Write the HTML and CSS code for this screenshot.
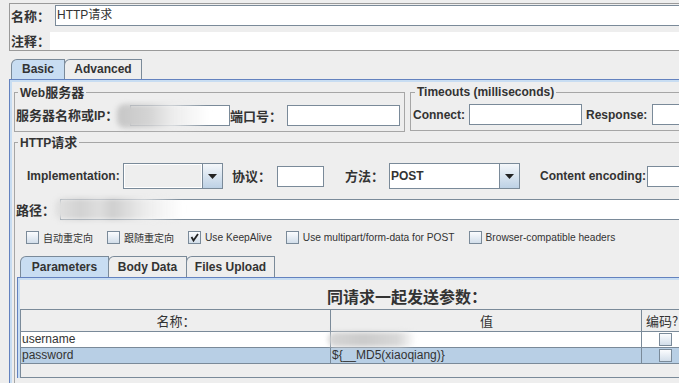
FILE: index.html
```html
<!DOCTYPE html>
<html lang="zh-CN">
<head>
  <meta charset="UTF-8">
  <meta name="viewport" content="width=device-width, initial-scale=1.0">
  <title>HTTP请求</title>
  <link rel="stylesheet" href="styles.css">
</head>
<body>
  <div class="name-panel">
    <div class="name-row">
      <span class="label zh name-label">名称：</span>
      <div class="text-field name-field">HTTP请求</div>
    </div>
    <div class="comment-row">
      <span class="label zh comment-label">注释：</span>
      <div class="comment-field"></div>
    </div>
  </div>

  <div class="tabs main-tabs">
    <div class="tab active basic-tab">Basic</div>
    <div class="tab advanced-tab">Advanced</div>
  </div>

  <div class="tab-panel main-panel">
    <div class="server-row">
      <fieldset class="group web-group">
        <legend>Web<span class="zh">服务器</span></legend>
        <div class="field-row">
          <span class="label host-label"><span class="zh">服务器名称或</span>IP<span class="zh">：</span></span>
          <div class="text-field host-field"></div>
          <span class="label zh port-label">端口号：</span>
          <div class="text-field port-field"></div>
          <div class="smudge host-smudge"></div>
        </div>
      </fieldset>
      <fieldset class="group timeout-group">
        <legend>Timeouts (milliseconds)</legend>
        <div class="field-row">
          <span class="label connect-label">Connect:</span>
          <div class="text-field connect-field"></div>
          <span class="label response-label">Response:</span>
          <div class="text-field response-field"></div>
        </div>
      </fieldset>
    </div>

    <fieldset class="group http-group">
      <legend>HTTP<span class="zh">请求</span></legend>

      <div class="impl-row">
        <span class="label impl-label">Implementation:</span>
        <div class="combo impl-combo">
          <div class="combo-value"></div>
          <div class="combo-arrow">
            <svg width="9" height="5" viewBox="0 0 9 5"><polygon points="0,0 9,0 4.5,5" fill="#222"/></svg>
          </div>
        </div>
        <span class="label zh protocol-label">协议：</span>
        <div class="text-field protocol-field"></div>
        <span class="label zh method-label">方法：</span>
        <div class="combo method-combo">
          <div class="combo-value">POST</div>
          <div class="combo-arrow">
            <svg width="9" height="5" viewBox="0 0 9 5"><polygon points="0,0 9,0 4.5,5" fill="#222"/></svg>
          </div>
        </div>
        <span class="label encoding-label">Content encoding:</span>
        <div class="text-field encoding-field"></div>
      </div>

      <div class="path-row">
        <span class="label zh path-label">路径：</span>
        <div class="text-field path-field"></div>
        <div class="smudge path-smudge"></div>
      </div>

      <div class="check-row">
        <label class="check"><span class="box"></span><span class="zh">自动重定向</span></label>
        <label class="check"><span class="box"></span><span class="zh">跟随重定向</span></label>
        <label class="check"><span class="box">
          <svg width="11" height="11" viewBox="0 0 11 11"><polyline points="2.5,5 4.5,8.5 9,2" fill="none" stroke="#222" stroke-width="1.8"/></svg>
        </span>Use KeepAlive</label>
        <label class="check"><span class="box"></span>Use multipart/form-data for POST</label>
        <label class="check"><span class="box"></span>Browser-compatible headers</label>
      </div>

      <div class="tabs sub-tabs">
        <div class="tab active params-tab">Parameters</div>
        <div class="tab body-tab">Body Data</div>
        <div class="tab files-tab">Files Upload</div>
      </div>

      <div class="tab-panel sub-panel">
        <div class="params-title"><span class="zh">同请求一起发送参数：</span></div>
        <div class="param-table">
          <div class="trow head">
            <div class="cell"><span class="zh">名称：</span></div>
            <div class="cell"><span class="zh">值</span></div>
            <div class="cell enc-head"><span class="zh">编码?</span></div>
          </div>
          <div class="trow plain">
            <div class="cell">username</div>
            <div class="cell value-cell"><div class="smudge value-smudge"></div></div>
            <div class="cell enc"><span class="box"></span></div>
          </div>
          <div class="trow selected">
            <div class="cell">password</div>
            <div class="cell">${__MD5(xiaoqiang)}</div>
            <div class="cell enc"><span class="box"></span></div>
          </div>
        </div>
      </div>
    </fieldset>
  </div>
</body>
</html>
```

FILE: styles.css
```css
* {
  box-sizing: border-box;
}
body {
  margin: 0;
  width: 679px;
  height: 383px;
  overflow: hidden;
  background: #eeeeee;
  color: #333333;
  font-family: "Liberation Sans", Arial, "Noto Sans CJK SC", sans-serif;
  font-size: 12px;
  line-height: 14px;
}
.zh {
  font-family: "Noto Sans CJK SC", sans-serif;
  font-size: 13px;
  line-height: 14px;
}
.label {
  flex: none;
  font-weight: bold;
  white-space: nowrap;
}
.text-field {
  flex: none;
  height: 21px;
  padding-left: 1px;
  line-height: 19px;
  background: #fff;
  border: 1px solid #7a8a99;
  white-space: nowrap;
}

/* name / comment */
.name-panel {
  width: 720px;
  margin: 3px 0 0 9px;
  padding: 1px 0 0 1px;
  border: 1px solid #9a9a9a;
  border-right: none;
}
.name-row, .comment-row {
  display: flex;
  align-items: center;
}
.name-label {
  width: 44px;
}
.name-field {
  width: 680px;
}
.comment-row {
  margin-top: 6px;
}
.comment-label {
  width: 39px;
}
.comment-field {
  flex: 1;
  height: 18px;
  background: #fff;
}

/* tabs */
.tabs {
  display: flex;
  height: 20px;
}
.tab {
  flex: none;
  background: #eeeeee;
  border: 1px solid #7a8a99;
  border-bottom: none;
  border-top-left-radius: 6px;
  font-weight: bold;
  line-height: 19px;
  text-align: center;
}
.tab + .tab {
  margin-left: -1px;
}
.tab.active {
  background: #c8ddf2;
}
.main-tabs {
  margin: 8px 0 0 11px;
}
.basic-tab {
  width: 54px;
}
.advanced-tab {
  width: 78px;
}
.tab-panel {
  border-top: 1px solid #6382bf;
  border-left: 1px solid #6382bf;
  padding: 2px 0 0 2px;
  box-shadow: inset 2px 2px 0 #c8ddf2;
}
.main-panel {
  width: 720px;
  height: 320px;
  margin-left: 9px;
}

/* groups */
.server-row {
  display: flex;
  align-items: flex-start;
}
.group {
  flex: none;
  min-width: 0;
  margin: 3px 0 0 2px;
  padding: 0 0 5px 1px;
  border: 1px solid #a6a6a6;
}
.group legend {
  margin-left: 2px;
  padding: 0 2px;
  font-weight: bold;
  line-height: 14px;
}
.web-group {
  width: 391px;
}
.timeout-group {
  width: 300px;
  margin-left: 5px;
  padding-left: 2px;
  border-right: none;
}
.field-row {
  position: relative;
  display: flex;
  align-items: center;
  margin-top: 5px;
}
.host-label {
  width: 114px;
}
.host-field {
  width: 100px;
}
.port-label {
  width: 57px;
}
.port-field {
  width: 113px;
}
.connect-label {
  width: 56px;
}
.connect-field {
  width: 113px;
}
.response-label {
  width: 66px;
  margin-left: 4px;
}
.response-field {
  width: 100px;
}

.http-group {
  width: 720px;
  border-right: none;
  border-bottom: none;
}
.impl-row {
  display: flex;
  align-items: center;
  height: 26px;
  margin-top: 13px;
  padding-left: 11px;
}
.impl-label {
  width: 96px;
}
.combo {
  flex: none;
  display: flex;
  height: 26px;
  border: 1px solid #7a8a99;
  background: #eeeeee;
}
.combo-value {
  flex: 1;
  padding-left: 1px;
  line-height: 24px;
  font-weight: bold;
  box-shadow: inset 1px 1px 0 #fff, inset -1px -1px 0 #fff;
}
.combo-arrow {
  width: 20px;
  display: flex;
  align-items: center;
  justify-content: center;
  border-left: 1px solid #7a8a99;
  background: linear-gradient(#f4f7fa, #bdd1e5);
}
.impl-combo {
  width: 100px;
}
.protocol-label {
  width: 45px;
  margin-left: 9px;
}
.protocol-field {
  width: 47px;
}
.method-label {
  width: 44px;
  margin-left: 21px;
}
.method-combo {
  width: 131px;
}
.method-combo .combo-value {
  background: #fff;
}
.encoding-label {
  width: 107px;
  margin-left: 20px;
}
.encoding-field {
  width: 80px;
}

.path-row {
  position: relative;
  display: flex;
  align-items: center;
  margin-top: 10px;
}
.path-label {
  width: 44px;
}
.path-field {
  flex: 1;
}

.check-row {
  display: flex;
  align-items: center;
  gap: 14px;
  height: 13px;
  margin-top: 11px;
  padding-left: 10px;
  font-size: 10.2px;
}
.check-row .zh {
  font-size: 10px;
}
.check {
  display: flex;
  align-items: center;
  white-space: nowrap;
}
.box {
  flex: none;
  display: flex;
  align-items: center;
  justify-content: center;
  width: 13px;
  height: 13px;
  margin-right: 4px;
  border: 1px solid #7a8a99;
  background: linear-gradient(#fbfcfe, #d2deea);
}

.sub-tabs {
  height: 21px;
  margin: 12px 0 0 4px;
}
.sub-tabs .tab {
  line-height: 20px;
}
.params-tab {
  width: 89px;
}
.body-tab {
  width: 79px;
}
.files-tab {
  width: 89px;
}
.sub-panel {
  margin-left: 1px;
}
.params-title {
  height: 29px;
  padding: 3px 0 0 307px;
  line-height: 26px;
  font-weight: bold;
}
.params-title .zh {
  font-size: 16px;
  line-height: 26px;
}

/* table */
.param-table {
  width: 700px;
  height: 69px;
  border-top: 1px solid #7a8a99;
  border-left: 1px solid #7a8a99;
  border-bottom: 1px solid #7a8a99;
}
.trow {
  display: grid;
  grid-template-columns: 310px 311px 47px;
  height: 16px;
  border-bottom: 1px solid #7a8a99;
}
.trow.head {
  height: 22px;
}
.trow.plain {
  background: #fff;
}
.trow.selected {
  background: #b8cfe5;
}
.cell {
  position: relative;
  padding-left: 1px;
  border-right: 1px solid #7a8a99;
  line-height: 15px;
  white-space: nowrap;
  overflow: hidden;
}
.head .cell {
  line-height: 21px;
  text-align: center;
}
.head .cell .zh {
  line-height: 21px;
}
.head .enc-head {
  padding-left: 4px;
  text-align: left;
}
.value-cell {
  overflow: visible;
}
.cell.enc {
  display: flex;
  align-items: center;
  justify-content: center;
}
.cell.enc .box {
  margin-right: 0;
}

/* blurred-out values */
.smudge {
  position: absolute;
  border-radius: 8px;
  filter: blur(2.5px);
}
.host-smudge {
  left: 101px;
  top: -1px;
  width: 92px;
  height: 24px;
  background: linear-gradient(to right, #c6c6c6, #d4d4d4 35%, #ececec 60%, rgba(255,255,255,0));
}
.path-smudge {
  left: 39px;
  top: -1px;
  width: 128px;
  height: 22px;
  background: linear-gradient(to right, #e2e2e2, #d2d2d2 20%, #dedede 35%, #cfcfcf 45%, #ececec 70%, rgba(255,255,255,0));
}
.value-smudge {
  left: -3px;
  top: 0;
  width: 88px;
  height: 15px;
  background: linear-gradient(to right, #d6d6d6, #cbcbcb 40%, #d8d8d8 80%, rgba(255,255,255,0));
}
```
